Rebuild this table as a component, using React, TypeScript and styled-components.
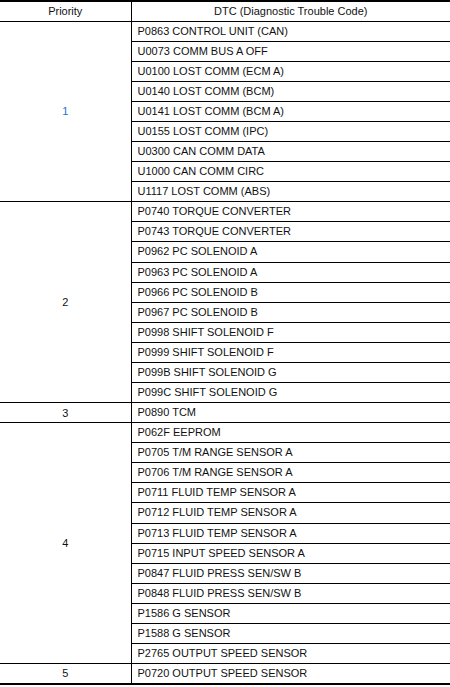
import React from "react";
import styled, { createGlobalStyle } from "styled-components";

const Global = createGlobalStyle`
  html, body { margin: 0; padding: 0; background: #fff; }
  body { font-family: "Liberation Sans", Arial, sans-serif; }
`;

const Table = styled.table`
  width: 450px;
  border-collapse: collapse;
  border-top: 2px solid #000;
  border-bottom: 2px solid #000;
  font-family: "Liberation Sans", Arial, sans-serif;
  font-size: 11px;
  color: #111;
  table-layout: fixed;
`;

const Row = styled.tr`
  height: 20.08px;
`;

const HeadCell = styled.th<{ $first?: boolean }>`
  font-weight: normal;
  text-align: center;
  padding: 0;
  border-bottom: 1px solid #000;
  border-left: ${(p) => (p.$first ? "none" : "1px solid #000")};
  line-height: 17px;
`;

const PriorityCell = styled.td<{ $accent?: boolean }>`
  text-align: center;
  vertical-align: middle;
  padding: 0;
  border-bottom: 1px solid #000;
  color: ${(p) => (p.$accent ? "#1a6fd0" : "#111")};
`;

const CodeCell = styled.td`
  text-align: left;
  padding: 0 0 0 6px;
  border-left: 1px solid #000;
  border-bottom: 1px solid #000;
  line-height: 17px;
  white-space: nowrap;
`;

const groups: { p: string; accent?: boolean; codes: string[] }[] = [
  {
    p: "1",
    accent: true,
    codes: [
      "P0863 CONTROL UNIT (CAN)",
      "U0073 COMM BUS A OFF",
      "U0100 LOST COMM (ECM A)",
      "U0140 LOST COMM (BCM)",
      "U0141 LOST COMM (BCM A)",
      "U0155 LOST COMM (IPC)",
      "U0300 CAN COMM DATA",
      "U1000 CAN COMM CIRC",
      "U1117 LOST COMM (ABS)",
    ],
  },
  {
    p: "2",
    codes: [
      "P0740 TORQUE CONVERTER",
      "P0743 TORQUE CONVERTER",
      "P0962 PC SOLENOID A",
      "P0963 PC SOLENOID A",
      "P0966 PC SOLENOID B",
      "P0967 PC SOLENOID B",
      "P0998 SHIFT SOLENOID F",
      "P0999 SHIFT SOLENOID F",
      "P099B SHIFT SOLENOID G",
      "P099C SHIFT SOLENOID G",
    ],
  },
  { p: "3", codes: ["P0890 TCM"] },
  {
    p: "4",
    codes: [
      "P062F EEPROM",
      "P0705 T/M RANGE SENSOR A",
      "P0706 T/M RANGE SENSOR A",
      "P0711 FLUID TEMP SENSOR A",
      "P0712 FLUID TEMP SENSOR A",
      "P0713 FLUID TEMP SENSOR A",
      "P0715 INPUT SPEED SENSOR A",
      "P0847 FLUID PRESS SEN/SW B",
      "P0848 FLUID PRESS SEN/SW B",
      "P1586 G SENSOR",
      "P1588 G SENSOR",
      "P2765 OUTPUT SPEED SENSOR",
    ],
  },
  { p: "5", codes: ["P0720 OUTPUT SPEED SENSOR"] },
];

export default function App() {
  return (
    <>
      <Global />
      <Table>
        <colgroup>
          <col style={{ width: 131 }} />
          <col />
        </colgroup>
        <thead>
          <Row>
            <HeadCell $first>Priority</HeadCell>
            <HeadCell>DTC (Diagnostic Trouble Code)</HeadCell>
          </Row>
        </thead>
        <tbody>
          {groups.map((g) =>
            g.codes.map((c, i) => (
              <Row key={c}>
                {i === 0 && (
                  <PriorityCell rowSpan={g.codes.length} $accent={g.accent}>
                    {g.p}
                  </PriorityCell>
                )}
                <CodeCell>{c}</CodeCell>
              </Row>
            ))
          )}
        </tbody>
      </Table>
    </>
  );
}
